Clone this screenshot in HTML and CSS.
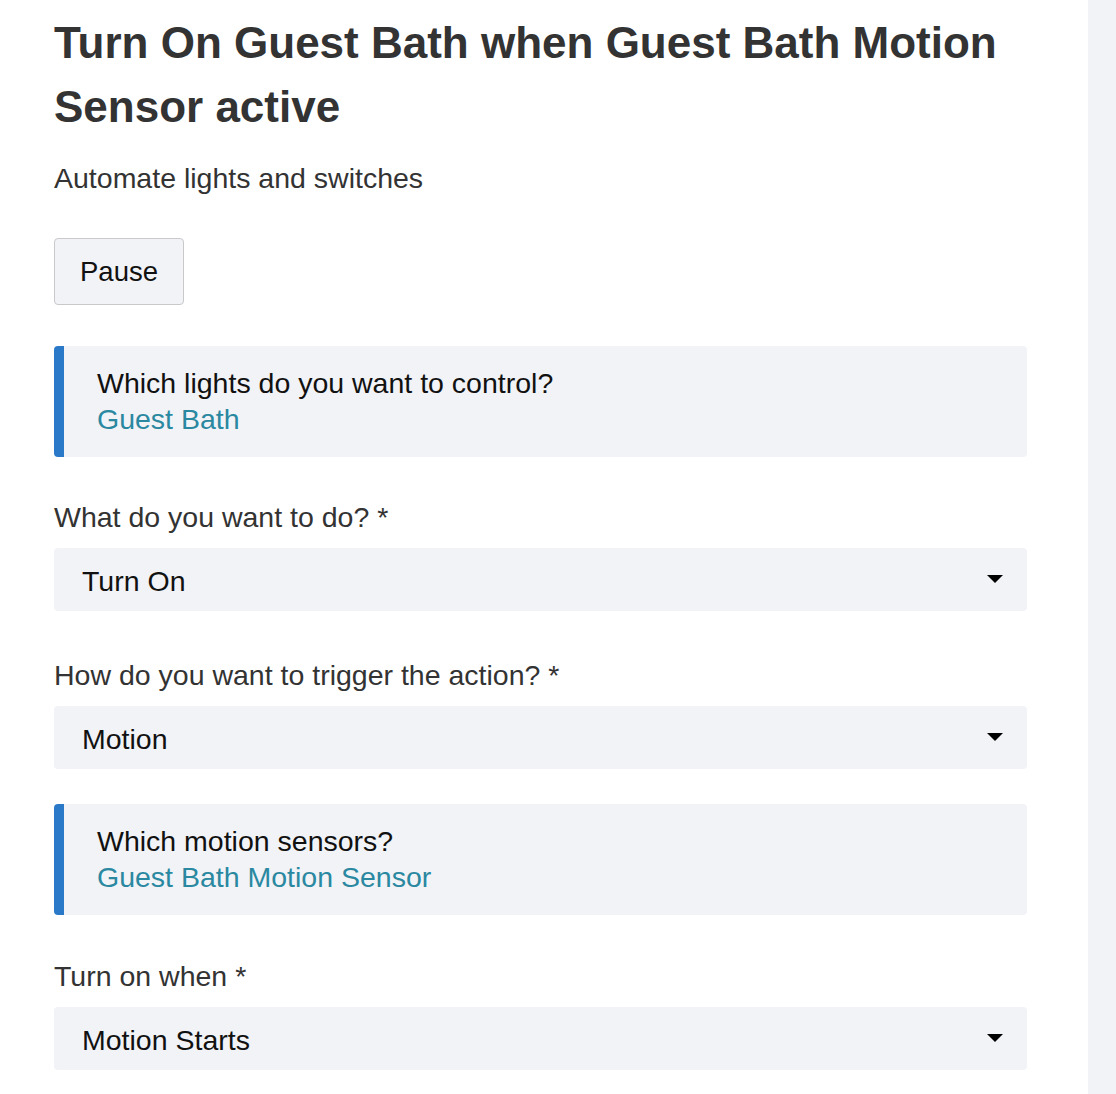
FILE: index.html
```html
<!DOCTYPE html>
<html>
<head>
<meta charset="utf-8">
<link rel="stylesheet" href="styles.css">
</head>
<body>
<div class="layout">
  <main class="main">
    <h1 class="title">Turn On Guest Bath when Guest Bath Motion Sensor active</h1>
    <p class="subtitle">Automate lights and switches</p>
    <button class="btn">Pause</button>

    <div class="box box-first">
      <div class="box-q">Which lights do you want to control?</div>
      <div class="box-a">Guest Bath</div>
    </div>

    <div class="field">
      <div class="label">What do you want to do? *</div>
      <div class="select"><span>Turn On</span><svg class="caret" width="16" height="8" viewBox="0 0 16 8"><path d="M0 0H16L8 8Z" fill="#000"/></svg></div>
    </div>

    <div class="field field-next">
      <div class="label">How do you want to trigger the action? *</div>
      <div class="select"><span>Motion</span><svg class="caret" width="16" height="8" viewBox="0 0 16 8"><path d="M0 0H16L8 8Z" fill="#000"/></svg></div>
    </div>

    <div class="box">
      <div class="box-q">Which motion sensors?</div>
      <div class="box-a">Guest Bath Motion Sensor</div>
    </div>

    <div class="field">
      <div class="label">Turn on when *</div>
      <div class="select"><span>Motion Starts</span><svg class="caret" width="16" height="8" viewBox="0 0 16 8"><path d="M0 0H16L8 8Z" fill="#000"/></svg></div>
    </div>
  </main>
  <aside class="strip"></aside>
</div>
</body>
</html>
```
FILE: styles.css
```css
html, body {
  margin: 0;
  padding: 0;
  background: #fff;
  overflow: hidden;
}
body {
  font-family: "Liberation Sans", Arial, Helvetica, sans-serif;
  font-size: 28.5px;
  line-height: 36px;
  color: #333;
}
.layout {
  display: flex;
  min-height: 100vh;
}
.main {
  flex: 1;
  padding: 11px 0 0 54px;
}
.strip {
  width: 28px;
  background: #f2f3f7;
  flex: none;
}
.title {
  margin: 0;
  width: 1000px;
  font-size: 44px;
  line-height: 64px;
  font-weight: bold;
  color: #333;
}
.subtitle {
  margin: 21px 0 0;
  color: #333;
}
.btn {
  display: block;
  margin: 42px 0 0;
  height: 67px;
  padding: 0 25px;
  font-family: inherit;
  font-size: 27.5px;
  line-height: 36px;
  color: #111;
  background: #f2f3f7;
  border: 1px solid #c9c9cc;
  border-radius: 4px;
}
.box {
  width: 973px;
  height: 111px;
  box-sizing: border-box;
  background: #f2f3f7;
  border-left: 10px solid #2a79c9;
  border-radius: 4px;
  padding: 19px 20px 0 33px;
  margin: 35px 0 43px;
}
.box-first {
  margin-top: 41px;
  margin-bottom: 42px;
}
.box-q {
  color: #111;
}
.box-a {
  color: #2a88a1;
}
.field {
  width: 973px;
}
.field-next {
  margin-top: 46px;
}
.label {
  color: #333;
  margin-bottom: 13px;
}
.select {
  display: flex;
  align-items: center;
  justify-content: space-between;
  height: 63px;
  box-sizing: border-box;
  padding: 2px 24px 0 28px;
  background: #f2f3f7;
  border-radius: 4px;
  color: #111;
}
.caret {
  display: block;
  margin-top: -4px;
}
```
